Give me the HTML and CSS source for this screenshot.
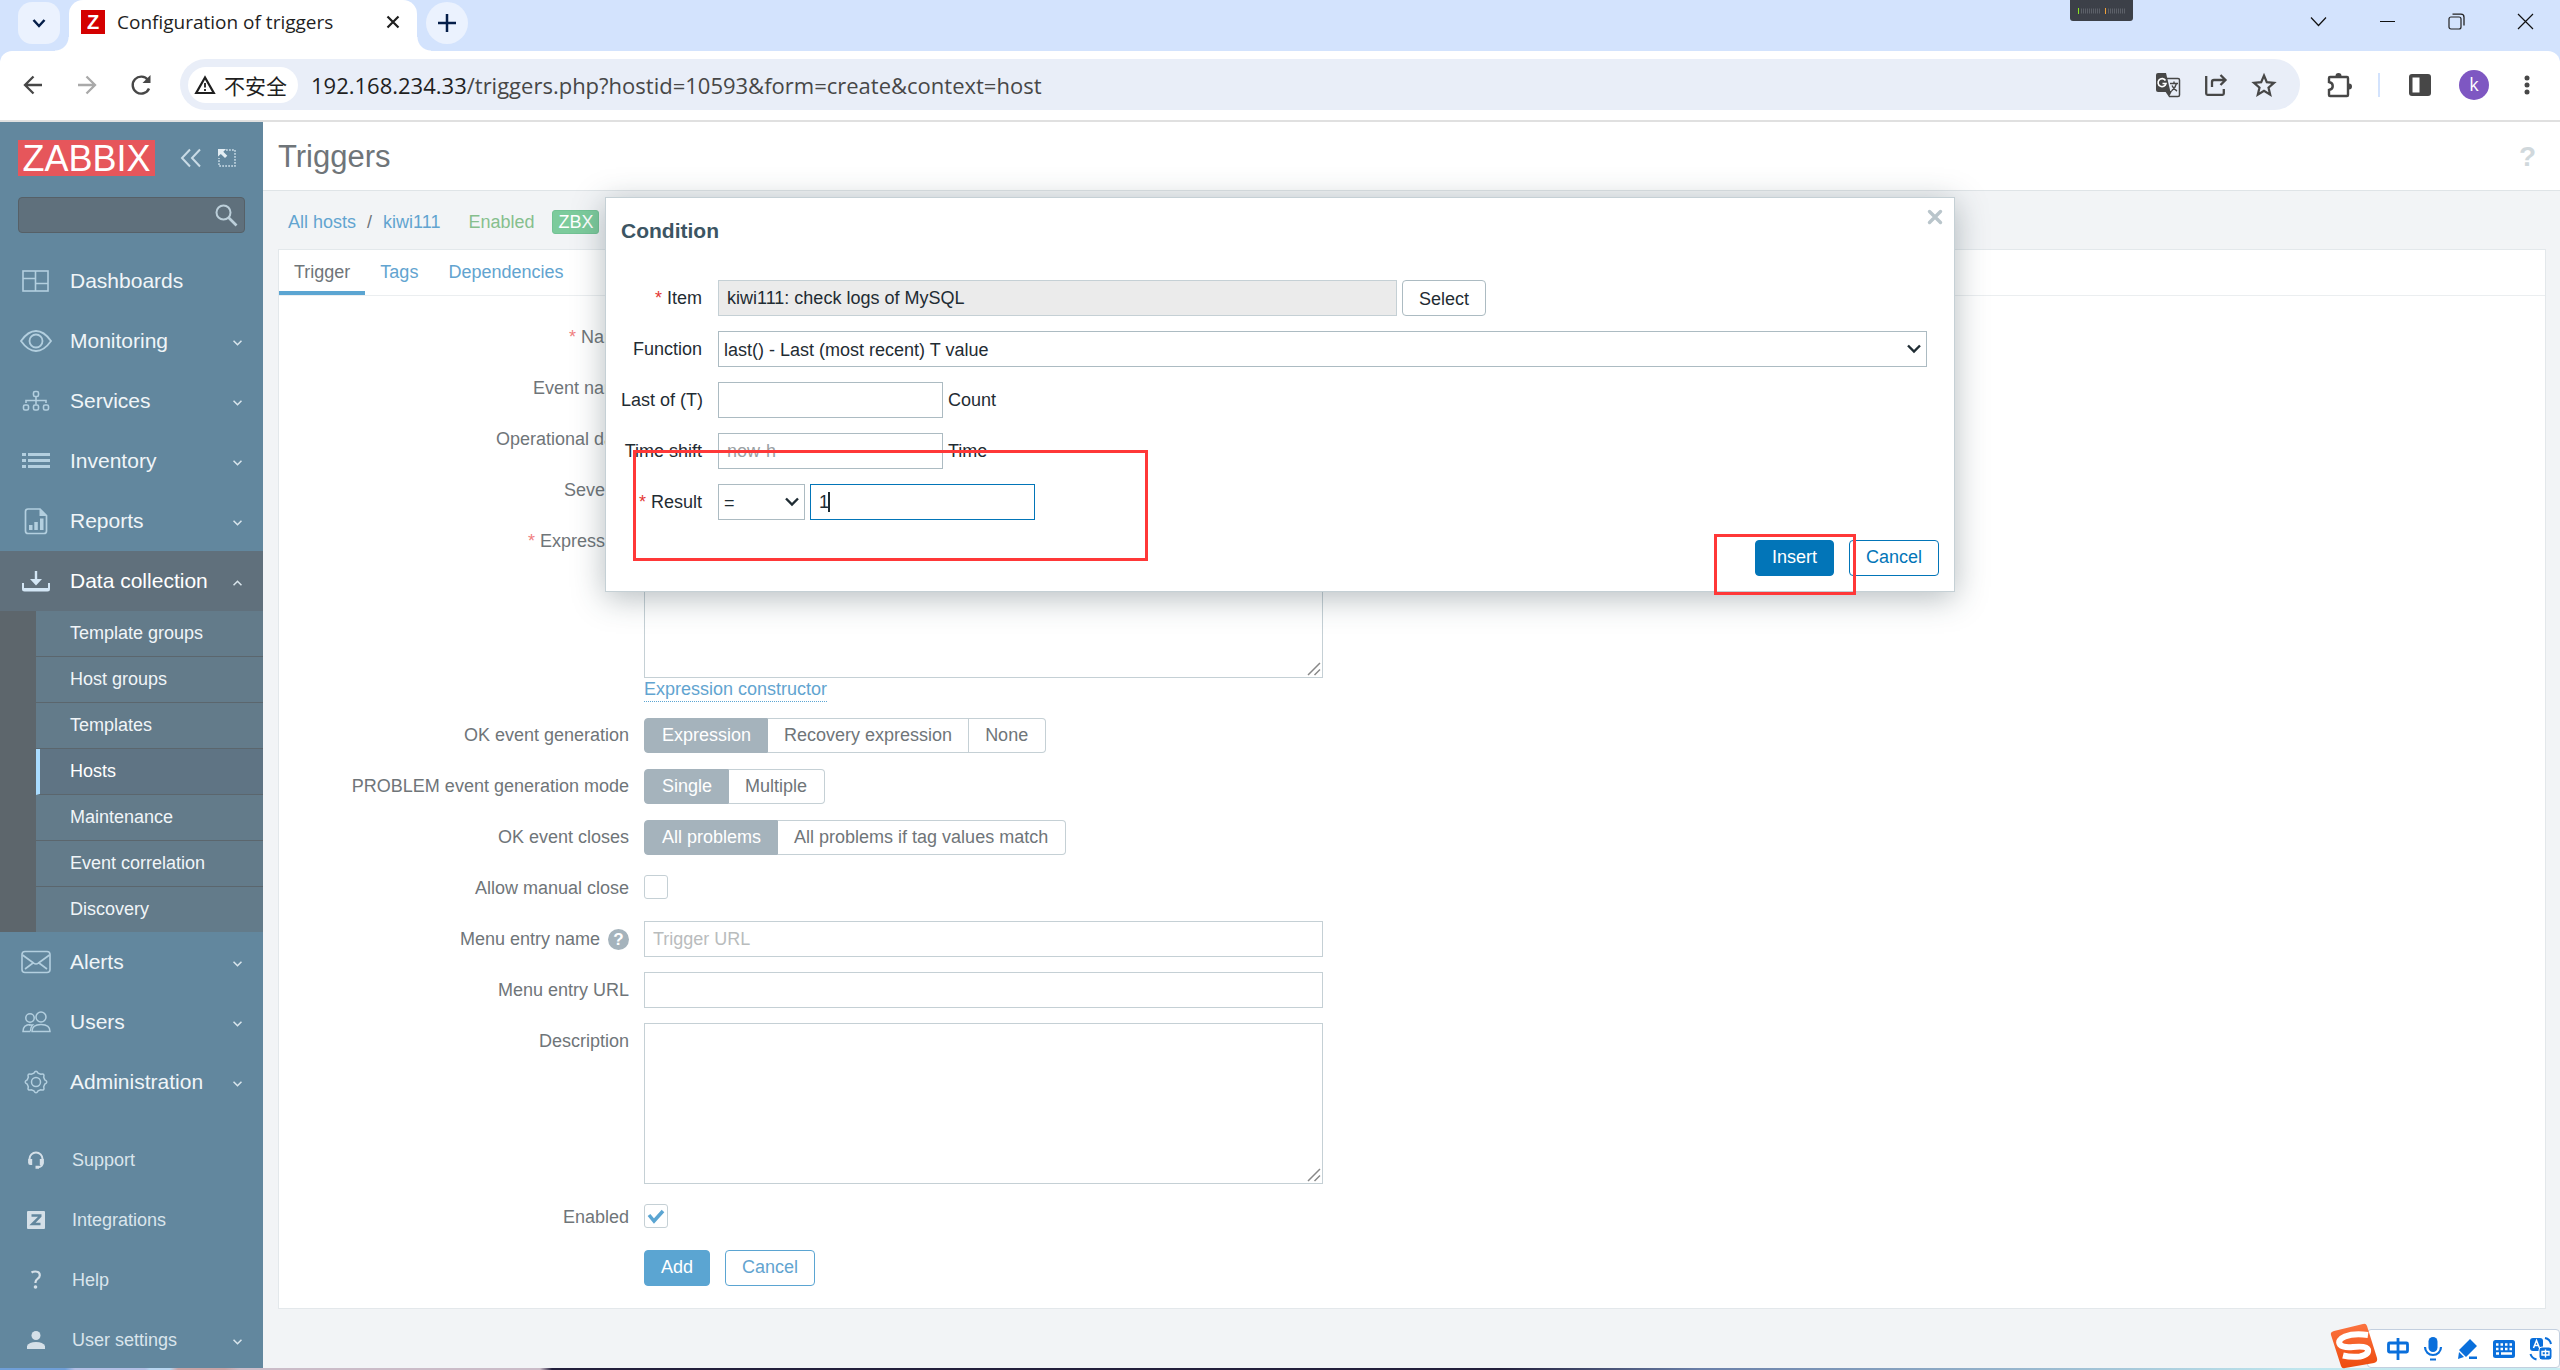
FILE: index.html
```html
<!DOCTYPE html>
<html lang="en">
<head>
<meta charset="utf-8">
<title>Configuration of triggers</title>
<link rel="stylesheet" href="styles.css">
</head>
<body>
<div class="window">
  <div class="tabstrip">
    <button class="round-btn tab-search" aria-label="Search tabs"><svg width="16" height="16" viewBox="0 0 16 16"><path d="M2.500 5l5.500 6 5.500-6" fill="none" stroke="#041e49" stroke-width="2.500"/></svg></button>
    <div class="tab">
      <span class="favicon">Z</span>
      <span class="tab-title">Configuration of triggers</span>
      <button class="plain tab-close" aria-label="Close tab"><svg width="14" height="14" viewBox="0 0 14 14"><path d="M1.500 1.500l11 11M12.500 1.500l-11 11" stroke="#1f1f1f" stroke-width="2.200"/></svg></button>
    </div>
    <button class="round-btn new-tab" aria-label="New tab"><svg width="18" height="18" viewBox="0 0 18 18"><path d="M9 0v18M0 9h18" stroke="#041e49" stroke-width="2.500"/></svg></button>
    <div class="meter"><svg width="48" height="6" viewBox="0 0 48 6"><path d="M3 3h20M30 3h17" stroke="#5d6169" stroke-width="5" stroke-dasharray="1 1"/><path d="M.5 0v6" stroke="#8be81e"/><path d="M27.500 0v6" stroke="#f0a13a"/></svg></div>
    <div class="win-controls">
      <button class="plain" aria-label="More"><svg width="17" height="17" viewBox="0 0 17 17"><path d="M1 4.500l7.500 8 7.500-8" fill="none" stroke="#111" stroke-width="1.200"/></svg></button>
      <button class="plain" aria-label="Minimize"><svg width="17" height="17" viewBox="0 0 17 17"><path d="M1 8.500h15" stroke="#111"/></svg></button>
      <button class="plain" aria-label="Restore"><svg width="17" height="17" viewBox="0 0 17 17"><rect x="1" y="4" width="12" height="12" rx="2" fill="none" stroke="#222" stroke-width="1.200"/><path d="M4.500 1.200H13q3 0 3 3V12.500" fill="none" stroke="#222" stroke-width="1.300"/></svg></button>
      <button class="plain" aria-label="Close"><svg width="17" height="17" viewBox="0 0 17 17"><path d="M1 1l15 15M16 1L1 16" stroke="#111" stroke-width="1.200"/></svg></button>
    </div>
  </div>
  <div class="toolbar">
    <button class="plain nav-btn" aria-label="Back"><svg width="20" height="20" viewBox="0 0 20 20"><path d="M19 10H2.500M10.500 1.500L2 10l8.500 8.500" fill="none" stroke="#474747" stroke-width="2.300"/></svg></button>
    <button class="plain nav-btn" aria-label="Forward"><svg width="20" height="20" viewBox="0 0 20 20"><path d="M1 10h16.500M9.500 1.500L18 10l-8.500 8.500" fill="none" stroke="#a9a9a9" stroke-width="2.300"/></svg></button>
    <button class="plain nav-btn" aria-label="Reload"><svg width="22" height="22" viewBox="0 0 22 22"><path d="M19 14.500A8.500 8.500 0 1 1 18 6" fill="none" stroke="#474747" stroke-width="2.400"/><path d="M20.500 1v8h-8z" fill="#474747"/></svg></button>
    <div class="omnibox">
      <button class="chip"><svg width="22" height="20" viewBox="0 0 22 20"><path d="M11 2.500L2.200 18h17.600z" fill="none" stroke="#1f1f1f" stroke-width="2.200"/><path d="M11 8v4.500M11 14v2" stroke="#1f1f1f" stroke-width="1.800"/></svg>不安全</button>
      <span class="url"><b>192.168.234.33</b>/triggers.php?hostid=10593&amp;form=create&amp;context=host</span>
      <div class="omni-icons">
        <svg width="26" height="26" viewBox="0 0 26 26"><path d="M3 1h8l4.500 19H3q-2 0-2-2V3q0-2 2-2z" fill="#474747"/><path d="M12 6.500h11q1.500 0 1.500 1.500v15q0 1.500-1.500 1.500h-9" fill="none" stroke="#474747" stroke-width="1.500"/><path d="M10 19h7l-3 6z" fill="#474747"/><path d="M10.500 8.500A4 4 0 1 0 11 11.500H7.500" fill="none" stroke="#fff" stroke-width="1.600"/><path d="M15 11.500h8M19 9.500v2M21.500 11.500c-1 4-3 6-5 7.500M17 13.500c1 2.500 3 4.500 5 5.500" fill="none" stroke="#474747" stroke-width="1.400"/></svg>
        <svg width="24" height="24" viewBox="0 0 24 24"><path d="M2.200 3v17.500q0 1.300 1.300 1.300h15q1.300 0 1.300-1.300V16" fill="none" stroke="#474747" stroke-width="2.300"/><path d="M8 14V9q0-2 2-2h11M16.500 2l5 5-5 5" fill="none" stroke="#474747" stroke-width="2.300"/></svg>
        <svg width="26" height="26" viewBox="0 0 26 26"><path d="M13 3.500l2.800 6.700 7.200.6-5.500 4.800 1.700 7.100-6.200-3.800-6.200 3.800 1.700-7.100L3 10.800l7.200-.6z" fill="none" stroke="#474747" stroke-width="2.200"/></svg>
      </div>
    </div>
    <div class="tool-icons">
      <svg width="26" height="26" viewBox="0 0 26 26"><path d="M3 6q0-1 1-1h17q1 0 1 1v17q0 1-1 1H4q-1 0-1-1v-5c5-1 5-7 0-8z" fill="none" stroke="#474747" stroke-width="2.400"/><path d="M9.500 4a3 3 0 0 1 6 0zM23 11.500a3 3 0 0 1 0 6z" fill="#474747"/></svg>
      <span class="tool-divider"></span>
      <svg class="panel-icon" width="22" height="22" viewBox="0 0 22 22"><rect width="22" height="22" rx="3" fill="#474747"/><path d="M3.500 3.500h7v15h-7z" fill="#fff"/></svg>
      <span class="avatar">k</span>
      <svg class="dots" width="6" height="20" viewBox="0 0 6 20"><g fill="#474747"><circle cx="3" cy="3" r="2.500"/><circle cx="3" cy="10" r="2.500"/><circle cx="3" cy="17" r="2.500"/></g></svg>
    </div>
  </div>

  <div class="page">
    <aside class="sidebar">
      <div class="brand">
        <a href="#" class="logo">ZABBIX</a>
        <button class="plain" aria-label="Collapse sidebar"><svg width="22" height="20" viewBox="0 0 22 20"><path d="M10 1.500L2 10l8 8.500M20 1.500L12 10l8 8.500" fill="none" stroke="#c9dbe6" stroke-width="2"/></svg></button>
        <button class="plain kiosk" aria-label="Hide sidebar"><svg width="20" height="20" viewBox="0 0 20 20"><path d="M9 2h9v16H2V10" fill="none" stroke="#c9dbe6" stroke-width="1.500" stroke-dasharray="1.800 1.200"/><path d="M1 1h8L6.300 3.700l4 4-2.300 2.300-4.200-4L1 8.500z" fill="#e3edf3"/></svg></button>
      </div>
      <div class="search">
        <input type="search" aria-label="Search">
        <svg width="24" height="24" viewBox="0 0 24 24"><circle cx="9.500" cy="9.500" r="7" fill="none" stroke="#bccfda" stroke-width="2"/><path d="M14.500 14.500l8 8" stroke="#bccfda" stroke-width="2.600"/></svg>
      </div>
      <nav class="menu">
        <a href="#" class="item"><svg width="32" height="26" viewBox="0 0 32 26"><g fill="none" stroke="#b3cfdf" stroke-width="1.600"><rect x="3" y="3" width="25" height="20"/><path d="M15.500 3v20M3 10.500h12.500M15.500 15.500H28"/></g></svg>Dashboards</a>
        <a href="#" class="item more"><svg width="32" height="26" viewBox="0 0 32 26"><g fill="none" stroke="#b3cfdf" stroke-width="1.800"><path d="M1 13Q8 3 16 3t15 10Q24 23 16 23T1 13z"/><circle cx="16" cy="13" r="6.500"/></g></svg>Monitoring</a>
        <a href="#" class="item more"><svg width="32" height="26" viewBox="0 0 32 26"><g fill="none" stroke="#b3cfdf" stroke-width="1.600"><rect x="13.500" y="3.500" width="5" height="5" rx="1.500"/><path d="M16 8.500v8M6 15v-2.500h20V15"/><rect x="3.500" y="17" width="5" height="5" rx="1.500"/><rect x="13.500" y="17" width="5" height="5" rx="1.500"/><rect x="23.500" y="17" width="5" height="5" rx="1.500"/></g></svg>Services</a>
        <a href="#" class="item more"><svg width="32" height="26" viewBox="0 0 32 26"><path d="M2 6.500h4M8 6.500h22M2 12.500h4M8 12.500h22M2 18.500h4M8 18.500h22" stroke="#b3cfdf" stroke-width="3"/></svg>Inventory</a>
        <a href="#" class="item more"><svg width="32" height="28" viewBox="0 0 32 28"><path d="M8 2h12l6.500 6.500V24q0 2.500-2.500 2.500H8Q5.500 26.500 5.500 24V4.500Q5.500 2 8 2z" fill="none" stroke="#b3cfdf" stroke-width="1.700"/><path d="M19.500 2v7H27zM9 18h3.500v5H9zM14.300 15h3.500v8h-3.500zM20 11.500h3.500V23H20z" fill="#b3cfdf"/></svg>Reports</a>
        <div class="section">
          <a href="#" class="item more open"><svg width="32" height="26" viewBox="0 0 32 26"><path d="M3 15v6q0 1.500 1.500 1.500h23q1.500 0 1.500-1.500v-6" fill="none" stroke="#d3e6f5" stroke-width="2"/><path d="M3 20h26v2.500H3zM14.800 3h2.400v8H22l-6 6.500-6-6.500h4.800z" fill="#d3e6f5"/></svg>Data collection</a>
          <div class="submenu">
            <a href="#">Template groups</a>
            <a href="#">Host groups</a>
            <a href="#">Templates</a>
            <a href="#" class="current">Hosts</a>
            <a href="#">Maintenance</a>
            <a href="#">Event correlation</a>
            <a href="#">Discovery</a>
          </div>
        </div>
        <a href="#" class="item more"><svg width="32" height="26" viewBox="0 0 32 26"><g fill="none" stroke="#b3cfdf" stroke-width="1.600"><rect x="2" y="2.500" width="28" height="21" rx="3"/><path d="M2.500 6l11 8q2.500 2 5 0l11-8M5 20l8-6M27 20l-8-6"/></g></svg>Alerts</a>
        <a href="#" class="item more"><svg width="32" height="26" viewBox="0 0 32 26"><g fill="none" stroke="#b3cfdf" stroke-width="1.500"><circle cx="10" cy="9" r="4.200"/><circle cx="21" cy="8" r="5"/><path d="M10.500 22.500H3q0-7 7.500-7M12 22.500q0-7 9-7t9 7z"/><path d="M10.500 22q0-4 2-6H9"/></g></svg>Users</a>
        <a href="#" class="item more"><svg width="32" height="26" viewBox="0 0 26 26"><g fill="none" stroke="#b3cfdf" stroke-width="1.500"><circle cx="13" cy="13" r="4.500"/><path d="M10.900 4.200Q13 .2 15.100 4.200L17.700 5.300Q22 4 20.700 8.300L21.800 10.900Q25.800 13 21.800 15.100L20.700 17.700Q22 22 17.700 20.700L15.100 21.800Q13 25.800 10.900 21.800L8.300 20.700Q4 22 5.300 17.700L4.200 15.100Q.2 13 4.200 10.900L5.300 8.300Q4 4 8.300 5.300z"/></g></svg>Administration</a>
      </nav>
      <nav class="menu minor">
        <a href="#" class="item"><svg width="32" height="20" viewBox="0 0 32 20"><path d="M9.500 13V9a6.500 6.500 0 0 1 13 0v4q0 3.500-4 4.200" fill="none" stroke="#d5e0e8" stroke-width="2"/><path d="M8.200 9h4v6h-2q-2 0-2-2zM19.800 9h4v4q0 2-2 2h-2zM15.500 15.800h3.500v3h-3.500z" fill="#d5e0e8"/></svg>Support</a>
        <a href="#" class="item"><svg width="32" height="20" viewBox="0 0 32 20"><rect x="7" y="1" width="18" height="18" rx="1" fill="#d5e0e8"/><path d="M11.500 5.500h8.700v.8L12.500 14h8" fill="none" stroke="#62879e" stroke-width="2.600"/></svg>Integrations</a>
        <a href="#" class="item"><svg width="32" height="20" viewBox="0 0 32 20"><path d="M11.500 2.500q1.500-1 4-1 4.300 0 4.300 3.700 0 2-2.300 3.600-2 1.300-2 3.500v.8" fill="none" stroke="#d5e0e8" stroke-width="2.200"/><circle cx="15.500" cy="17" r="1.800" fill="#d5e0e8"/></svg>Help</a>
        <a href="#" class="item more"><svg width="32" height="20" viewBox="0 0 32 20"><circle cx="16" cy="5.500" r="4.500" fill="#d5e0e8"/><path d="M7 19v-3q2-4 9-4t9 4v3z" fill="#d5e0e8"/></svg>User settings</a>
      </nav>
    </aside>

    <main class="content">
      <header class="page-header">
        <h1>Triggers</h1>
        <a href="#" class="help" aria-label="Help">?</a>
      </header>
      <div class="crumbs">
        <a href="#">All hosts</a><span class="slash">/</span><a href="#">kiwi111</a><span class="ok">Enabled</span><span class="tag">ZBX</span>
      </div>
      <section class="card">
        <div class="tabs">
          <a href="#" class="active">Trigger</a><a href="#">Tags</a><a href="#">Dependencies</a>
        </div>
        <form class="form">
          <div class="row"><label class="req" for="name">Name</label><input type="text" id="name"></div>
          <div class="row"><label for="event">Event name</label><input type="text" id="event"></div>
          <div class="row"><label for="opdata">Operational data</label><input type="text" id="opdata"></div>
          <div class="row"><label for="severity">Severity</label><input type="text" id="severity"></div>
          <div class="row"><label class="req" for="expr">Expression</label>
            <div class="stack"><textarea id="expr" class="expr"></textarea><a href="#" class="dotted">Expression constructor</a></div></div>
          <div class="row"><span class="label">OK event generation</span>
            <div class="segments"><label><input type="radio" name="okgen" checked><span>Expression</span></label><label><input type="radio" name="okgen"><span>Recovery expression</span></label><label><input type="radio" name="okgen"><span>None</span></label></div></div>
          <div class="row"><span class="label">PROBLEM event generation mode</span>
            <div class="segments"><label><input type="radio" name="mode" checked><span>Single</span></label><label><input type="radio" name="mode"><span>Multiple</span></label></div></div>
          <div class="row"><span class="label">OK event closes</span>
            <div class="segments"><label><input type="radio" name="closes" checked><span>All problems</span></label><label><input type="radio" name="closes"><span>All problems if tag values match</span></label></div></div>
          <div class="row"><label for="manual">Allow manual close</label><input type="checkbox" id="manual"></div>
          <div class="row"><label for="mname">Menu entry name<span class="hint">?</span></label><input type="text" id="mname" placeholder="Trigger URL"></div>
          <div class="row"><label for="murl">Menu entry URL</label><input type="text" id="murl"></div>
          <div class="row"><label for="descr">Description</label><textarea id="descr" class="descr"></textarea></div>
          <div class="row"><label for="enabled">Enabled</label><input type="checkbox" id="enabled" checked></div>
          <div class="row"><span class="label"></span><div class="actions"><button type="button" class="btn primary">Add</button><button type="button" class="btn outline">Cancel</button></div></div>
        </form>
      </section>
    </main>
  </div>
  <div class="wallpaper"></div>
</div>

<div class="dialog" role="dialog" aria-labelledby="dlg-title">
  <h2 id="dlg-title">Condition</h2>
  <button class="plain dlg-close" aria-label="Close"><svg width="16" height="16" viewBox="0 0 16 16"><path d="M2.500 2.500l11 11M13.500 2.500l-11 11" stroke="#b9c5cb" stroke-width="3.400" stroke-linecap="round"/></svg></button>
  <form class="dlg-form">
    <label class="req" for="item">Item</label>
    <div class="field"><input type="text" id="item" class="wide" value="kiwi111: check logs of MySQL" readonly><button type="button" class="btn select-btn">Select</button></div>
    <label for="func">Function</label>
    <div class="field"><select id="func" class="full"><option>last() - Last (most recent) T value</option></select></div>
    <label for="lastof">Last of (T)</label>
    <div class="field"><input type="text" id="lastof"><span>Count</span></div>
    <label for="shift">Time shift</label>
    <div class="field"><input type="text" id="shift" placeholder="now-h"><span>Time</span></div>
    <label class="req" for="result">Result</label>
    <div class="field"><select class="op" aria-label="Operator"><option>=</option></select><span class="caret-box"><input type="text" id="result" class="focused" value="1"><i class="caret"></i></span></div>
  </form>
  <div class="dlg-footer"><button type="button" class="btn primary">Insert</button><button type="button" class="btn outline">Cancel</button></div>
  <div class="mark mark-result"></div>
  <div class="mark mark-insert"></div>
</div>

<div class="ime">
  <svg class="ime-logo" width="48" height="46" viewBox="0 0 48 46"><defs><linearGradient id="sg" x1="0" y1="0" x2="0" y2="1"><stop offset="0" stop-color="#fb7340"/><stop offset="1" stop-color="#ee4b0e"/></linearGradient></defs><path d="M4 8L33 1q3-1 4 2l10 32q1 4-3 5l-29 5q-3 1-4-2L1 12q-1-3 3-4z" fill="url(#sg)"/><path d="M38 12Q24 10 15 13.500q-8 3.500-5 8 3 3.500 13 2.500 14-1.500 15 2.500 1 5-8 7-9 1-17-1" fill="none" stroke="#fff" stroke-width="6"/></svg>
  <svg width="22" height="22" viewBox="0 0 22 22"><g fill="none" stroke="#0a6fdb" stroke-width="2.800"><rect x="1.500" y="5" width="19" height="9" rx="1"/><path d="M11 0v22"/></g></svg>
  <svg width="20" height="24" viewBox="0 0 20 24"><rect x="5.500" y="0" width="9" height="15" rx="4.500" fill="#0a6fdb"/><path d="M2 10a8 8 0 0 0 16 0M7 22.500h6" fill="none" stroke="#0a6fdb" stroke-width="2.200"/></svg>
  <svg width="22" height="22" viewBox="0 0 22 22"><path d="M13 1l7 7L9 19l-7-7zM2 14l5 5-6 2zM12 18.500h8v2.500h-8z" fill="#0a6fdb"/></svg>
  <svg width="22" height="18" viewBox="0 0 22 18"><rect width="22" height="18" rx="2.500" fill="#0a6fdb"/><path d="M3 4.500h16M3 9h16" stroke="#fff" stroke-width="2.500" stroke-dasharray="2.500 2"/><path d="M3 13.500h3M8 13.500h11" stroke="#fff" stroke-width="2.500"/></svg>
  <svg width="24" height="24" viewBox="0 0 24 24"><rect x="1" y="1" width="13" height="13" rx="3" fill="#0a6fdb"/><rect x="10" y="10" width="13" height="13" rx="3" fill="#0a6fdb" stroke="#fff"/><path d="M4.500 11l3-7.500 3 7.500M5.500 8.500h4" fill="none" stroke="#fff" stroke-width="1.500"/><path d="M13 14.500h7v3.500h-7zM16.500 12.500v8" fill="none" stroke="#fff" stroke-width="1.400"/><path d="M16 1q5 1 6 6M1.500 17q1 4 6 5.500" fill="none" stroke="#0a6fdb" stroke-width="2"/></svg>
</div>
</body>
</html>
```
FILE: styles.css
```css
* { box-sizing: border-box; }
body { margin: 0; font: 18px/22px "Liberation Sans", Arial, sans-serif; color: #6f7579; }
a { color: inherit; text-decoration: none; }
svg { display: block; flex: none; }
button, input, select, textarea { font: inherit; }
button { cursor: pointer; }
.plain { border: 0; padding: 0; background: none; }

.window { display: flex; flex-direction: column; height: 100vh; overflow: hidden; background: #d3e3fd; }

/* Browser frame */
.tabstrip { display: flex; align-items: flex-start; height: 51px; flex: none; padding-left: 18px; font-family: "Open Sans", sans-serif; }
.round-btn { display: flex; align-items: center; justify-content: center; width: 42px; height: 42px; margin-top: 2px; padding: 0; border: 0; background: #ebf2fe; }
.tab-search { border-radius: 14px; }
.new-tab { border-radius: 50%; margin-left: 9px; }
.tab { position: relative; display: flex; align-items: center; width: 348px; height: 51px; margin-left: 9px; padding: 0 17px 8px 12px; border-radius: 14px 14px 0 0; background: #fff; }
.tab::before, .tab::after { content: ""; position: absolute; bottom: 0; width: 14px; height: 14px; }
.tab::before { right: 100%; background: radial-gradient(circle at 0 0, transparent 13px, #fff 14px); }
.tab::after { left: 100%; background: radial-gradient(circle at 100% 0, transparent 13px, #fff 14px); }
.favicon { width: 24px; height: 24px; background: #d40000; color: #fff; font: bold 20px/24px "Liberation Sans", sans-serif; text-align: center; }
.tab-title { margin-left: 12px; flex: 1; color: #1f1f1f; font-size: 19px; white-space: nowrap; }
.meter { width: 63px; height: 21px; margin-left: auto; padding: 8px; border-radius: 0 0 3px 3px; background: #3c4048; }
.win-controls { display: flex; margin-left: 151px; }
.win-controls button { display: flex; align-items: center; justify-content: center; width: 69px; height: 43px; }
.toolbar { display: flex; align-items: center; flex: none; height: 71px; padding: 0 30px 2px 6px; border-bottom: 2px solid #e0e0e0; border-radius: 12px 12px 0 0; background: #fff; font-family: "Open Sans", "Noto Sans CJK SC", sans-serif; }
.nav-btn { display: flex; justify-content: center; width: 54px; }
.omnibox { display: flex; align-items: center; flex: 1; height: 51px; margin-left: 12px; padding: 0 23px 0 8px; border-radius: 26px; background: #e9eef8; }
.chip { display: flex; align-items: center; gap: 8px; height: 36px; padding: 0 11px 0 6px; border: 0; border-radius: 18px; background: #fff; color: #1f1f1f; font: 21px/36px "Noto Sans CJK SC", sans-serif; }
.url { margin-left: 13px; font-size: 22px; color: #474747; white-space: nowrap; }
.url b { font-weight: normal; color: #1f1f1f; }
.omni-icons { display: flex; align-items: center; gap: 23px; margin-left: auto; }
.tool-icons { display: flex; align-items: center; margin-left: 26px; }
.tool-divider { width: 2px; height: 24px; margin-left: 26px; background: #d3e3fd; }
.panel-icon { margin-left: 29px; }
.avatar { width: 30px; height: 30px; margin-left: 28px; border-radius: 50%; background: #7e57c2; color: #fff; font-size: 18px; line-height: 29px; text-align: center; }
.dots { margin-left: 35px; }

/* Page frame */
.page { display: flex; flex: 1; min-height: 0; background: #f2f4f6; }
.wallpaper { flex: none; height: 2px; background: linear-gradient(90deg, #6f9fd8 0 65px, #b3bfe4 75px 145px, #b8d6f0 150px 170px, #c9a3a5 178px 225px, #cbbcc8 240px 540px, #231f3c 552px 1500px, #6a7fa8 1700px, #bfe6ee 2300px, #c9edf2); }

.sidebar { width: 263px; flex: none; overflow: hidden; background: #62879e; color: #f0f5f8; }
.brand { display: flex; align-items: center; padding: 18px 18px 0; }
.logo { width: 137px; height: 36px; margin-right: 25px; background: #e6565b; color: #fff; font-size: 36px; line-height: 37px; text-align: center; }
.kiosk { margin-left: 15px; }
.search { display: flex; align-items: center; height: 36px; margin: 21px 18px 18px; padding-right: 6px; border: 1px solid #566067; border-radius: 4px; background: #5f707c; }
.search input { flex: 1; min-width: 0; height: 34px; border: 0; outline: 0; background: none; color: #fff; appearance: none; }
.item { display: flex; align-items: center; gap: 18px; height: 60px; padding: 0 20px; font-size: 21px; }
.more::after { content: ""; width: 9px; height: 6px; margin: 4px 1px 0 auto; background: url("data:image/svg+xml,%3Csvg xmlns='http://www.w3.org/2000/svg' width='9' height='6'%3E%3Cpath d='M.5 .7l4 4 4-4' fill='none' stroke='%23d9e5ec' stroke-width='1.600'/%3E%3C/svg%3E"); }
.open { background: #60707c; color: #fff; }
.open::after { transform: rotate(180deg); }
.submenu { padding-left: 36px; background: #5d666c; }
.submenu a { display: block; height: 46px; padding-left: 34px; border-bottom: 1px solid #5b666d; background: #637b8a; line-height: 44px; }
.submenu .current { padding-left: 30px; border-left: 4px solid #a9dcff; background: #5f7484; color: #fff; }
.submenu a:last-child { height: 45px; border-bottom: 0; }
.minor { margin-top: 18px; color: #dae5ec; }
.minor .item { gap: 20px; font-size: 18px; }

.content { flex: 1; min-width: 0; }
.page-header { display: flex; align-items: center; justify-content: space-between; height: 69px; padding: 1px 24px 0 15px; border-bottom: 1px solid #dfe4e7; background: #fff; }
h1 { margin: 0; font-size: 31px; font-weight: normal; line-height: 68px; }
.help { color: #d0d8dc; font-size: 28px; font-weight: bold; }
.crumbs { display: flex; align-items: center; height: 58px; padding: 4px 25px 0; }
.crumbs a, .tabs a { color: #62a4d0; }
.slash { margin: 0 11px; }
.ok { margin-left: 28px; color: #86bf8d; }
.tag { margin-left: 18px; padding: 0 5px; border: 1px solid #72c294; border-radius: 3px; background: #7ccb9c; color: #fff; line-height: 22px; }
.card { margin: 0 14px 0 15px; border: 1px solid #e3e8eb; background: #fff; }
.tabs { display: flex; height: 46px; border-bottom: 1px solid #ebeef0; }
.tabs a { padding: 0 15px; line-height: 45px; }
.tabs .active { border-bottom: 4px solid #5ba5d2; color: #6f7579; }

/* Form rows */
.form { display: flex; flex-direction: column; gap: 15px; padding: 23px 0 22px; }
.row { display: flex; gap: 15px; min-height: 36px; }
.row > label, .row > .label { width: 350px; flex: none; line-height: 36px; text-align: right; }
.req::before { content: "*"; margin-right: 5px; color: #e33734; }
.row .req::before { color: #f08080; }
input[type=text], textarea, select { border: 1px solid #c5d0d5; border-radius: 0; outline: 0; background: #fff; color: #1f2c33; }
input[type=text] { height: 36px; padding: 0 8px; }
.row > input[type=text], .row textarea { width: 679px; }
::placeholder { color: #b9bcbd; opacity: 1; }
textarea { display: block; margin: 0; }
textarea::-webkit-resizer { background: url("data:image/svg+xml,%3Csvg xmlns='http://www.w3.org/2000/svg' width='15' height='15'%3E%3Cpath d='M1 13L13 1M7.500 13L13 7.500' fill='none' stroke='%23888' stroke-width='1.500'/%3E%3C/svg%3E") right bottom no-repeat; }
.expr { height: 155px; }
.descr { height: 161px; }
.dotted { display: inline-block; border-bottom: 1px dotted #5ba5d2; color: #62a4d0; line-height: 23px; }
.segments { display: flex; align-items: flex-end; height: 36px; }
.segments input { position: absolute; opacity: 0; }
.segments span { display: block; height: 35px; padding: 0 16px; border: 1px solid #c5d0d5; border-left-width: 0; line-height: 32px; }
.segments label:first-child span { padding-left: 17px; border-left-width: 1px; border-radius: 4px 0 0 4px; }
.segments label:last-child span { padding-right: 17px; border-radius: 0 4px 4px 0; }
.segments input:checked + span { border-color: #a5b3bc; background: #a5b3bc; color: #fff; }
input[type=checkbox] { appearance: none; width: 24px; height: 24px; margin: 5px 0 0; border: 1px solid #c5d0d5; border-radius: 3px; background: #fff center no-repeat; }
input[type=checkbox]:checked { background-image: url("data:image/svg+xml,%3Csvg xmlns='http://www.w3.org/2000/svg' width='18' height='16'%3E%3Cpath d='M2 7l5 6 9-10' fill='none' stroke='%235ba5d2' stroke-width='3.500'/%3E%3C/svg%3E"); }
.hint { display: inline-block; width: 21px; height: 21px; margin-left: 8px; border-radius: 50%; background: #a5b3bc; color: #fff; font-size: 17px; font-weight: bold; line-height: 21px; text-align: center; }
.actions { display: flex; gap: 15px; }
.btn { height: 36px; padding: 0 16px 2px; border: 1px solid #5ba5d2; border-radius: 4px; background: #fff; color: #62a4d0; }
.btn.primary { background: #5ba5d2; color: #fff; }

/* Condition dialog */
.dialog { position: absolute; top: 197px; left: 0; right: 0; width: 1350px; margin: 0 auto; padding: 15px; border: 1px solid #c5d0d5; background: #fff; box-shadow: 0 6px 30px rgba(43, 64, 72, .35); color: #1f2c33; }
h2 { margin: 0; color: #3c5563; font-size: 21px; line-height: 36px; }
.dlg-close { position: absolute; top: 11px; right: 11px; }
.dlg-form { display: grid; grid-template-columns: 81px 1fr; gap: 15px 16px; margin-top: 31px; }
.dlg-form > label { line-height: 36px; text-align: right; white-space: nowrap; }
.field { display: flex; align-items: center; gap: 5px; height: 36px; padding-right: 12px; line-height: 36px; }
.dialog input, .dialog select { width: 225px; height: 36px; border-color: #acbbc2; }
.dialog .wide { width: 679px; border-color: #c5d0d5; background: #ebebeb; }
.dialog ::placeholder { color: #9aa0a3; }
select { appearance: none; padding: 0 5px; background: #fff url("data:image/svg+xml,%3Csvg xmlns='http://www.w3.org/2000/svg' width='16' height='12'%3E%3Cpath d='M2 2.500l6 6 6-6' fill='none' stroke='%231f2c33' stroke-width='2.400'/%3E%3C/svg%3E") right 4px center no-repeat; }
.dialog .full { width: 100%; }
.dialog .op { width: 87px; }
.dialog .focused { border-color: #0275b8; }
.dialog .select-btn { border-color: #acbbc2; color: #1f2c33; }
.caret-box { position: relative; display: flex; }
.caret { position: absolute; top: 8px; left: 18px; width: 2px; height: 20px; background: #1f2c33; }
.dlg-footer { display: flex; justify-content: flex-end; gap: 15px; margin-top: 20px; }
.dialog .outline { border-color: #0275b8; color: #0275b8; }
.dialog .primary { border-color: #0275b8; background: #0275b8; }
.mark { position: absolute; border: 3px solid #ff3838; pointer-events: none; }
.mark-result { top: 252px; left: 27px; width: 515px; height: 111px; }
.mark-insert { top: 336px; right: 98px; width: 142px; height: 61px; }

/* Input method bar */
.ime { position: absolute; right: 0; bottom: 2px; display: flex; align-items: center; gap: 14px; height: 39px; padding-right: 6px; border: 1px solid #c3cfdf; border-radius: 4px; background: #fff; }
.ime-logo { margin: -6px -5px 0 -38px; }
```
